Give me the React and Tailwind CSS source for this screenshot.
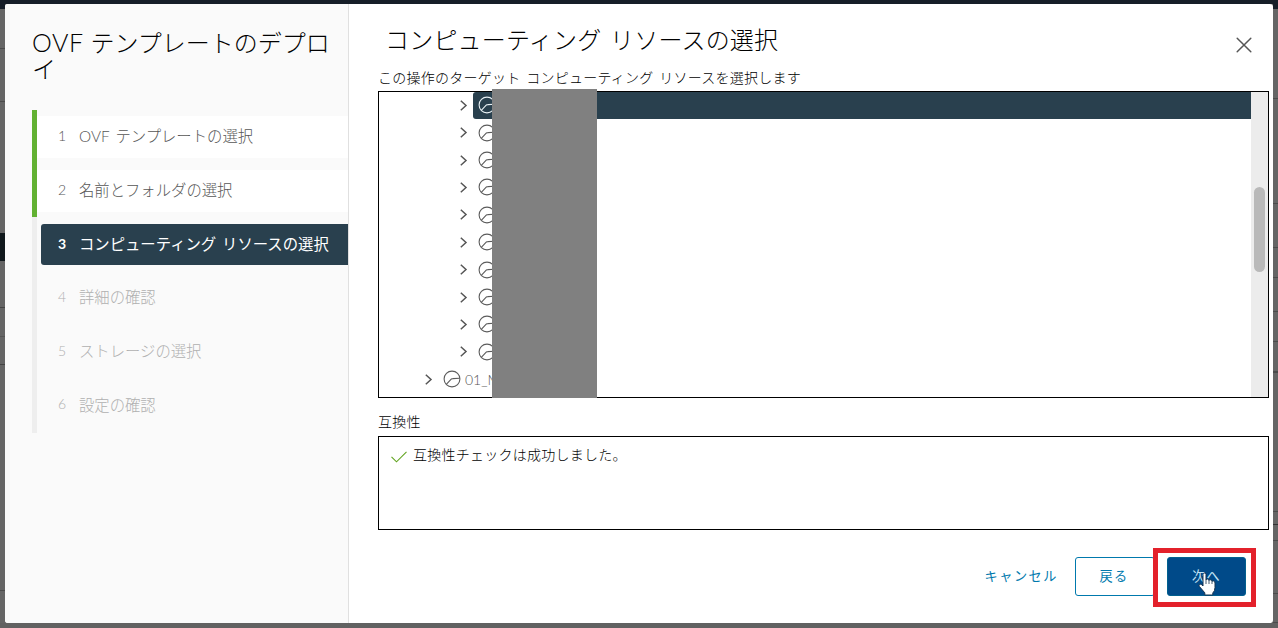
import React from "react";

const doneSteps = [
  { n: 1, label: "OVF テンプレートの選択" },
  { n: 2, label: "名前とフォルダの選択" },
];
const pendingSteps = [
  { n: 4, label: "詳細の確認" },
  { n: 5, label: "ストレージの選択" },
  { n: 6, label: "設定の確認" },
];

function Chevron() {
  return (
    <svg className="h-[11px] w-2 shrink-0" viewBox="0 0 8 11" fill="none" stroke="#565656" strokeWidth="1.5">
      <path d="M0.8 0.8 L6 5.5 L0.8 10.2" />
    </svg>
  );
}

function PoolIcon({ light }) {
  return (
    <svg className="h-[18px] w-[18px] shrink-0" viewBox="0 0 18 18" fill="none" stroke={light ? "#e8f0f4" : "#5c5c5c"} strokeWidth="1.1">
      <circle cx="9" cy="9" r="7.9" />
      <path d="M3.3 14.3 L8.2 9.2 Q8.8 8.6 9.8 8.6 L16.8 8.3" />
    </svg>
  );
}

function TreeRow({ selected }) {
  return (
    <div className="flex h-[27.4px] shrink-0 items-center pl-[81px]">
      <Chevron />
      <div
        className={
          selected
            ? "ml-[5px] flex h-full flex-1 items-center rounded-l-[3px] bg-[#29404e] pl-[5px]"
            : "ml-[5px] flex h-full flex-1 items-center pl-[5px]"
        }
      >
        <PoolIcon light={selected} />
      </div>
    </div>
  );
}

function Step({ n, label, className }) {
  return (
    <div className={className}>
      <span className="w-[21px] shrink-0 pb-[3px] text-[14px]">{n}</span>
      <span className="whitespace-nowrap text-[15.35px] [word-spacing:2px]">{label}</span>
    </div>
  );
}

function LeftBackdrop() {
  return (
    <div className="flex w-[5px] shrink-0 flex-col bg-[#656565]">
      <div className="h-[5px] bg-[#161e28]" />
      <div className="h-10 border-b border-[#4b4b4b]" />
      <div className="h-[53px] border-b border-[#4b4b4b]" />
      <div className="h-[131px]" />
      <div className="h-7 bg-[#10181c]" />
      <div className="h-[47px] border-b border-[#444444]" />
      <div className="h-[29px] border-b border-[#555555]" />
      <div className="h-7 border-b border-[#444444]" />
      <div className="h-[226px] border-b border-[#4b4b4b]" />
    </div>
  );
}

function RightBackdrop() {
  return (
    <div className="flex w-[5px] shrink-0 flex-col overflow-hidden bg-[#656565]">
      <div className="h-[5px] bg-[#161e28]" />
      <div className="h-[90px] border-b border-[#4b4b4b]" />
      <div className="h-[105px] border-b border-[#4b4b4b]" />
      <div className="h-11 border-b border-[#4b4b4b]" />
      <div className="h-[30px] border-b border-[#4b4b4b]" />
      <div className="h-[34px] border-b border-[#4b4b4b]" />
      <div className="h-[30px] border-b border-[#4b4b4b]" />
      <div className="h-[31px] border-b-2 border-[#4b4b4b]" />
      <div className="h-[139px] border-b border-[#4b4b4b]" />
      <div className="h-[13px] border-b border-[#333333]" />
      <div className="h-4 border-b border-[#4b4b4b]" />
      <div className="h-[53px] border-b border-[#4b4b4b]" />
      <div className="h-[29px] border-b border-[#4b4b4b]" />
    </div>
  );
}

export default function App() {
  return (
    <div className="relative flex h-[628px] w-[1278px] flex-col overflow-hidden bg-[#616161] font-['Lato','Noto_Sans_CJK_JP',sans-serif] font-light text-black">
      <div className="h-1 shrink-0 bg-[#161e28]" />
      <div className="flex h-[619px]">
        <LeftBackdrop />
        <div className="flex w-[1268px] overflow-hidden rounded-[3px] bg-white">
          <aside className="w-[344px] shrink-0 border-r border-[#e0e0e0] bg-[#fafafa] pl-[27px]">
            <h1 className="h-[106px] pt-[26px] text-[24px] leading-[26px]">
              <span className="block whitespace-nowrap">
                <span className="text-[25px] leading-none tracking-[0.6px]">OVF </span>テンプレートのデプロ
              </span>
              <span className="block">イ</span>
            </h1>
            <div className="h-[107px] border-l-[5px] border-[#62b132] pt-[6px]">
              {doneSteps.map((s) => (
                <Step
                  key={s.n}
                  n={s.n}
                  label={s.label}
                  className="mb-[12px] flex h-[42px] items-center bg-white pl-[21px] text-[#565656]"
                />
              ))}
            </div>
            <div className="h-[216px] border-l-[5px] border-[#eeeeee] pt-[7px]">
              <Step
                n={3}
                label="コンピューティング リソースの選択"
                className="ml-1 flex h-[41px] items-center rounded-l-[3px] bg-[#29404e] pl-[17px] font-normal text-white [&>span:first-child]:font-bold"
              />
              <div className="pt-[12px]">
                {pendingSteps.map((s) => (
                  <Step key={s.n} n={s.n} label={s.label} className="mb-[11.7px] flex h-[42px] items-center pl-[21px] text-[#b0b0b0]" />
                ))}
              </div>
            </div>
          </aside>

          <main className="flex flex-1 flex-col pl-[29px] pr-[4px]">
            <header className="flex h-[62px] shrink-0 justify-between pl-[7px] pr-[17px] pt-[18px]">
              <h2 className="whitespace-nowrap text-[24px] leading-[36px] tracking-[0.2px] [word-spacing:2px]">コンピューティング リソースの選択</h2>
              <svg className="mt-[15px] h-4 w-4" viewBox="0 0 16 16" stroke="#565656" strokeWidth="1.5" strokeLinecap="round">
                <path d="M1.2 1.2 L14.8 14.8 M14.8 1.2 L1.2 14.8" />
              </svg>
            </header>
            <p className="h-[25px] whitespace-nowrap text-[14px] leading-[24px] tracking-[0.25px] [word-spacing:1.6px]">
              この操作のターゲット コンピューティング リソースを選択します
            </p>
            <section className="flex h-[307px] shrink-0 border border-black">
              <div className="flex min-w-0 flex-1 flex-col overflow-hidden">
                <div className="-mt-[0.4px] flex flex-col">
                  {Array.from({ length: 10 }, (_, i) => (
                    <TreeRow key={i} selected={i === 0} />
                  ))}
                  <div className="flex h-[27.4px] items-center pl-[46px] text-[#565656]">
                    <Chevron />
                    <span className="ml-[10px] flex">
                      <PoolIcon />
                    </span>
                    <span className="ml-1 text-[14px]">01_M</span>
                  </div>
                </div>
              </div>
              <div className="w-[17px] bg-[#ececec] pl-[3px] pt-[95px]">
                <div className="h-[85px] w-[11px] rounded-full bg-[#b9b9b9]" />
              </div>
            </section>
            <p className="h-[38px] pt-[12px] text-[14px] leading-[24px] tracking-[0.3px]">互換性</p>
            <section className="flex h-[94px] shrink-0 border border-black pl-3 pt-[6px]">
              <svg className="mt-[8px] h-[12px] w-4" viewBox="0 0 16 12" fill="none" stroke="#62a420" strokeWidth="1.1">
                <path d="M0.5 5.8 L5.5 10.8 L15.5 0.8" />
              </svg>
              <p className="ml-[6px] whitespace-nowrap text-[14px] leading-[24px] tracking-[0.25px]">互換性チェックは成功しました。</p>
            </section>
            <footer className="flex h-[66px] justify-end pr-[23px] pt-[27px] text-[13.2px] font-normal">
              <button className="mr-[17px] h-[39px] whitespace-nowrap pt-px tracking-[1.5px] text-[#0079ad]">キャンセル</button>
              <button className="mr-[12px] h-[39px] w-[80px] rounded-[3px] border border-[#0079ad] pr-[2px] pt-px tracking-[1.4px] text-[#0079ad]">戻る</button>
              <button className="h-[39px] w-[79px] rounded-[3px] border border-[#00608f] bg-[#004a89] pt-px tracking-[1.4px] text-[#c4e4f6]">次へ</button>
            </footer>
          </main>
        </div>
        <RightBackdrop />
      </div>

      <div className="absolute left-[492px] top-[89px] h-[309px] w-[105px] bg-[#808080]" />
      <div className="absolute left-[1153px] top-[548px] h-[59px] w-[103px] border-[5px] border-[#e3212b]" />
      <svg className="absolute left-[1198px] top-[572px] h-[24px] w-[19px]" viewBox="0 0 19 24" fill="#ffffff" stroke="#17334f" strokeWidth="1">
        <path d="M5 2.5 Q5 1 6.5 1 Q8 1 8 2.5 V8 Q8.3 7 9.5 7 Q10.8 7 11 8.5 Q11.3 7.6 12.5 7.8 Q13.8 8 14 9.5 Q14.5 8.6 15.7 9 Q17 9.5 17 11 V15.5 Q17 19 14.8 21 V23 H6.8 V20.8 L1.4 14.5 Q0.6 13.2 1.6 12.4 Q2.6 11.8 3.8 12.8 L5 14 Z" />
        <path d="M8 8 V12 M11 8.5 V12 M14 9.5 V12" strokeWidth="0.8" />
      </svg>
    </div>
  );
}
